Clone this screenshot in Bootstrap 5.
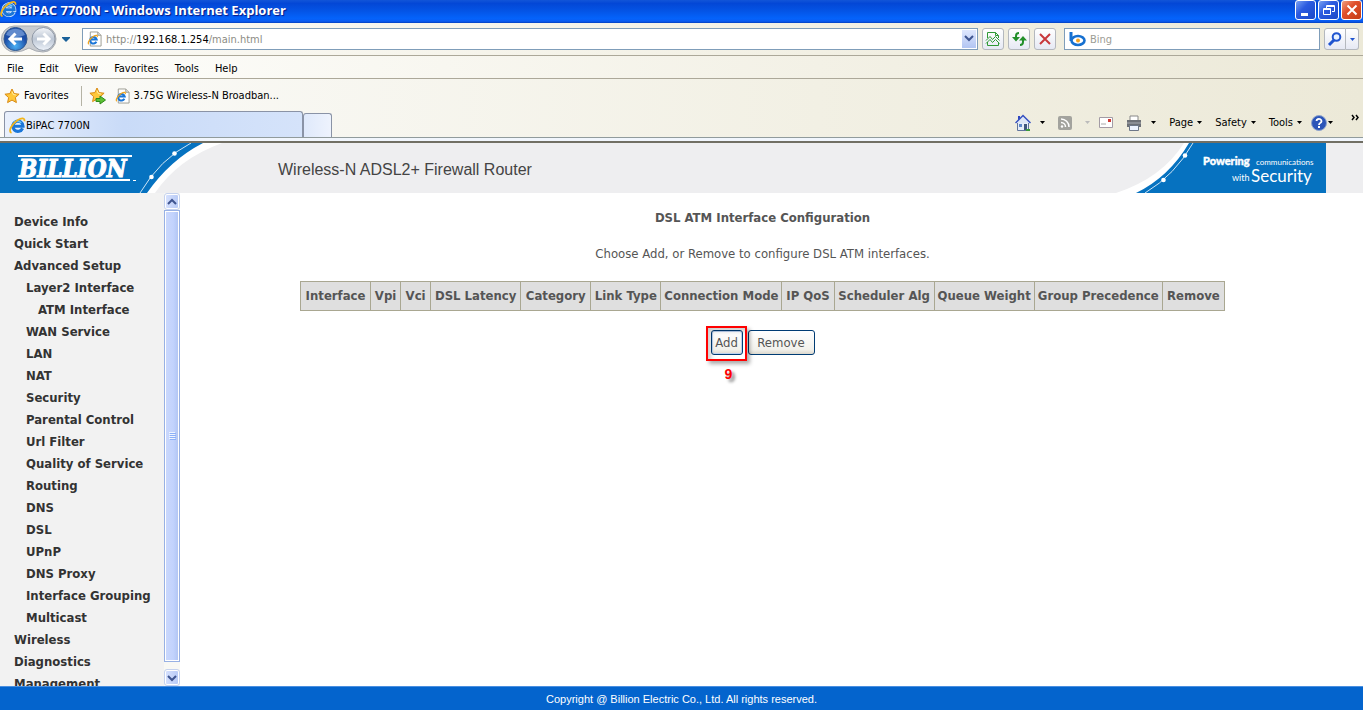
<!DOCTYPE html>
<html lang="en">
<head>
<meta charset="utf-8">
<meta name="viewport" content="width=device-width, initial-scale=1">
<title>BiPAC 7700N</title>
<link href="https://cdn.jsdelivr.net/npm/bootstrap@5.3.0/dist/css/bootstrap.min.css" rel="stylesheet">
<style>
:root{--ui:"DejaVu Sans Condensed","DejaVu Sans",sans-serif;--chrome:"DejaVu Sans Condensed","Noto Sans",sans-serif}
body{font-family:var(--chrome);font-size:11px;line-height:16px;color:#000;background:#fff}
a{color:inherit;text-decoration:none}
button{font:inherit;color:inherit}
svg{display:block;flex:none}
.titlebar{height:23px;background:linear-gradient(#1255d8 0,#0347d6 15%,#0453e4 45%,#0463fb 80%,#0a5cf2 92%,#0340c0 100%);color:#fff;font:bold 13px/20px "Open Sans",sans-serif;text-shadow:1px 1px 1px #0a1883}
.titleicon{margin-right:2px}
.winbtns{gap:2px;padding-right:1px}
.winbtn{width:21px;height:20px;padding:0;border:1px solid #fff;border-radius:3px;background:linear-gradient(135deg,#7ba2f2,#2c5be0 40%,#1a48c8)}
.winbtn-close{background:linear-gradient(135deg,#f0a080,#e0502c 40%,#c43c14)}
.winbtn svg{margin:auto}
.navrow{height:32px;background:linear-gradient(90deg,#fbfaf5,#f2f0e4 60%,#ece9d8)}
.menurow{height:24px;padding:4px 0 0 7px;border-top:1px solid #aca899;border-bottom:1px solid #aca899;background:linear-gradient(90deg,#fefefc,#f3f1e6 60%,#ece9d8)}
.favrow{height:29px;padding-top:5px;background:linear-gradient(90deg,#fbfbf9,#f2f0e4 60%,#ece9d8)}
.tabrow{height:30px;background:linear-gradient(90deg,#fbfbf9,#f2f0e4 60%,#ece9d8);border-bottom:1px solid #919b9c}
.strip{height:5px;background:#f1f6fd;border-bottom:2px solid #716f64}
.fieldbox{height:22px;border:1px solid #7f9db9;background:#fff}
.fieldbox input{border:0;outline:0;padding:2px 0 0;min-width:0;background:transparent;font-size:11px;color:#8c8c84}
.fieldbox input::placeholder{color:#9c9c94;opacity:1}
.searchbox{width:256px}
.urltext{color:#8c8c84;padding-top:2px}
.urltext b{font-weight:400;color:#000}
.drop{width:14px;height:18px;margin-right:1px;border:0;padding:0;background:linear-gradient(#dfe7fd,#b2c5f2)}
.toolbtn{height:22px;width:22px;padding:0;border:1px solid #b4b8be;border-radius:3px;background:linear-gradient(#fff,#e6e9f4)}
.toolbtn svg{margin:auto}
.toolbtn-slim{width:13px}
.plainbtn{border:0;background:none;padding:0;display:flex;align-items:center}
.menurow a{padding-right:16px}
.tabitem{border:1px solid #8a93a6;border-bottom:0;border-radius:3px 3px 0 0}
.tab-main{width:299px;height:26px;padding-top:2px;background:linear-gradient(90deg,#e9f0fc,#c9dbf8 40%,#d5e3fa)}
.tab-new{width:29px;height:24px;background:linear-gradient(90deg,#dfe9fb,#eef3fd)}
.sep{width:1px;height:20px;background:#b5b3a5;margin:0 7px 0 12px}
.brandbar{height:50px;background:#eeeef0;color:#444}
.logo{width:278px}
.tagline{margin-right:37px}
.product{font:16px/24px "Liberation Sans",Arial,sans-serif;padding-top:4px}
.gap-arrow{margin-left:9px}
.gap-item{margin-left:13px}
.more{margin:0 0 0 18px}
.sidecol{width:180px}
.sidemenu{background:#f2f2f2;font:bold 13px/22px var(--ui);color:#333;padding:18px 0 0 14px}
.sidemenu li{height:22px;white-space:nowrap}
.lvl2{padding-left:12px}
.lvl3{padding-left:24px}
.sbar{width:16px;background:#f8f8f4}
.sbtn{height:15px;width:14px;margin:1px;padding:0;border:1px solid #fff;border-radius:2px;background:linear-gradient(90deg,#d5e0fd,#b9cbf6);outline:1px solid #c5d2ee}
.thumb{margin:1px 1px 8px;border:1px solid #fff;outline:1px solid #98b1e4;background:linear-gradient(90deg,#c9d7fc,#c2d3fd 60%,#b2c6f4)}
.pane{padding:15px 18px 0 0;font:13px/20px var(--ui);color:#555}
.pane h1{font:bold 13px/20px var(--ui);margin:0 0 16px}
.intro{margin:0 0 17px}
.pane table{width:925px;table-layout:fixed;border-collapse:collapse;border:1px solid #a9a791;background:#dfdfdf;margin:0 auto}
.pane th{border:1px solid #a9a791;height:29px;padding:0;white-space:nowrap;text-align:center}
.c30{width:30px}.c52{width:52px}.c62{width:62px}.c70{width:70px}.c90{width:90px}.c100{width:100px}.c121{width:121px}.c128{width:128px}
.actions{gap:5px;margin-top:19px}
.xpbtn{height:25px;border:1px solid #003c74;border-radius:3px;background:linear-gradient(#fff,#f2f1ec 80%,#dcd8ce);padding:0}
.xp-add{width:32px;box-shadow:inset 0 0 0 1px #bcd0ee}
.xp-rem{width:67px}
.callout{position:absolute;left:-5px;top:-4px;width:41px;height:35px;border:2px solid #f00;box-shadow:3px 3px 4px #0005,inset 3px 3px 4px #0003;pointer-events:none}
.callnum{position:absolute;left:14px;top:34px;color:#f00;font:bold 14px/20px "Liberation Sans",Arial,sans-serif;text-shadow:3px 3px 3px #0007}
.foot{height:24px;background:#0464cd;border-top:1px solid #4a8fe0;color:#fff;font:11px/24px "Liberation Sans",Arial,sans-serif}
</style>
</head>
<body class="d-flex flex-column vh-100 overflow-hidden">
<svg width="0" height="0" class="position-absolute" aria-hidden="true">
<symbol id="ie" viewBox="0 0 16 16"><path d="M12.800 10.600A4.800 4.800 0 1 1 13.200 8.700H5" fill="none" stroke="#e8f4ff" stroke-width="4.200"/><path d="M12.800 10.600A4.800 4.800 0 1 1 13.200 8.700H5" fill="none" stroke="#1b76d8" stroke-width="3"/><path d="M5 4.800A5 5 0 0 1 11.500 5.500" fill="none" stroke="#69c4fa" stroke-width="1.500"/><path d="M2.500 14.800C-1 14 2 7 8 3c4-2.500 7-2.500 6.500 1" fill="none" stroke="#f2b51c" stroke-width="1.700"/></symbol>
<symbol id="iepage" viewBox="0 0 16 16"><path d="M3.500 .5h8l3.500 3.500v11.500H3.500z" fill="#fff" stroke="#9a9a90"/><path d="M11.500 .5V4H15" fill="#ddd" stroke="#9a9a90"/><path d="M10 11A3.500 3.500 0 1 1 10.300 8.500H4" fill="none" stroke="#1b76d8" stroke-width="2.200"/><path d="M2 13.500c-2-1 1-6 5-8.500 3-1.500 4.500-1 4 1" fill="none" stroke="#f2a51c" stroke-width="1.300"/></symbol>
<symbol id="star" viewBox="0 0 16 16"><path d="M8 1l2.100 4.600 5 .6-3.700 3.400 1 5L8 12.100l-4.400 2.500 1-5L.9 6.200l5-.6z" fill="#ffc83a" stroke="#d98a12" stroke-linejoin="round"/><path d="M8 3.500l1.300 3 2.500.4" fill="none" stroke="#fff1a8"/></symbol>
<symbol id="tri" viewBox="0 0 5 3"><path d="M0 0h5L2.500 3z"/></symbol>
</svg>

<header class="flex-shrink-0">
<div class="titlebar d-flex align-items-start">
  <svg width="17" height="18" class="titleicon"><use href="#ie"/></svg>
  <span class="flex-grow-1">BiPAC 7700N - Windows Internet Explorer</span>
  <div class="winbtns d-flex">
    <button class="winbtn" aria-label="Minimize"><svg width="14" height="14"><path d="M2 10h7v3H2z" fill="#fff"/></svg></button>
    <button class="winbtn" aria-label="Restore"><svg width="14" height="14" fill="none" stroke="#fff"><path d="M4.500 5V2.500h8v6H10M4.500 3.500h8M1.500 5.500h7v6h-7zM1.500 6.500h7"/></svg></button>
    <button class="winbtn winbtn-close" aria-label="Close"><svg width="14" height="14"><path d="M2.500 2.500l9 9m0-9l-9 9" stroke="#fff" stroke-width="2"/></svg></button>
  </div>
</div>

<div class="navrow d-flex align-items-center">
  <svg width="58" height="30" viewBox="0 0 58 30">
    <defs><radialGradient id="bk" cy=".8"><stop offset="0" stop-color="#49b0f4"/><stop offset="1" stop-color="#1d4ea8"/></radialGradient><linearGradient id="fw" x2="0" y2="1"><stop stop-color="#f4f6f9"/><stop offset=".5" stop-color="#bcc6d4"/><stop offset="1" stop-color="#eef3fa"/></linearGradient></defs>
    <path d="M14 2h29a13 13 0 0 1 0 26q-7 0-14-4-7 4-14 4a13 13 0 0 1-1-26z" fill="#c9ccd0" stroke="#a9adb3"/>
    <circle cx="15.500" cy="15" r="11.500" fill="url(#bk)" stroke="#31598f"/><path d="M6 11a10 9 0 0 1 19 0q-9 4-19 0z" fill="#8fb3e4" opacity=".6"/>
    <path d="M22 15H10m5.500-5.500L10 15l5.500 5.500" fill="none" stroke="#fff" stroke-width="3"/>
    <circle cx="43.500" cy="15" r="11.500" fill="url(#fw)" stroke="#8f98a5"/>
    <path d="M37 15h12m-5.500-5.500L49 15l-5.500 5.500" fill="none" stroke="#fff" stroke-width="3"/>
  </svg>
  <button class="plainbtn mx-1" aria-label="Recent pages"><svg width="8" height="6"><path d="M0 1h8v1L4 6 0 2z" fill="#1a6199"/></svg></button>
  <div class="fieldbox d-flex align-items-center flex-grow-1 ms-2 ps-1">
    <svg width="15" height="16" class="me-1"><use href="#iepage"/></svg>
    <a href="#" class="urltext flex-grow-1">http://<b>192.168.1.254</b>/main.html</a>
    <button class="drop" aria-label="Addresses"><svg width="14" height="10"><path d="M3 2l4 4 4-4" fill="none" stroke="#3f5590" stroke-width="2"/></svg></button>
  </div>
  <div class="d-flex gap-1 ms-1 me-2">
    <button class="toolbtn" aria-label="Compatibility view"><svg width="16" height="16" fill="none" stroke="#2f9a35"><path d="M2.500 7V1.500h8l3 3V7M2.500 11v3.500h11V11M10.500 1.500v3h3"/><path d="M1 9.500l4-4 2.500 3 3-3 4 4M1 12.500l4-4 2.500 3 3-3 4 4"/></svg></button>
    <button class="toolbtn" aria-label="Refresh"><svg width="16" height="16" fill="#23902b" stroke="#23902b" stroke-width="2"><path d="M8 2Q5 2 5 5v2M9 14q3 0 3-3V9" fill="none"/><path d="M1 6h8L5 10.500zM8 9.500h8L12 5z" stroke="none"/></svg></button>
    <button class="toolbtn" aria-label="Stop"><svg width="16" height="16"><path d="M3 3l10 10M13 3L3 13" stroke="#c8383c" stroke-width="2"/></svg></button>
  </div>
  <div class="fieldbox d-flex align-items-center searchbox">
    <svg width="17" height="16" class="mx-1"><path d="M2 1v9" stroke="#1670d0" stroke-width="3"/><ellipse cx="9" cy="9.500" rx="6.500" ry="4.500" fill="#fff" stroke="#1670d0" stroke-width="2.600"/><circle cx="9" cy="9.500" r="2" fill="#f6a21c"/></svg>
    <input type="text" class="flex-grow-1" placeholder="Bing" aria-label="Search">
  </div>
  <div class="d-flex ms-1 me-1">
    <button class="toolbtn rounded-end-0" aria-label="Search"><svg width="16" height="16" fill="none" stroke="#1f54d0"><circle cx="9.500" cy="6" r="3.800" fill="#e8f2ff" stroke-width="2"/><path d="M7 9l-5 5" stroke-width="3"/></svg></button>
    <button class="toolbtn toolbtn-slim rounded-start-0 border-start-0" aria-label="Search options"><svg width="5" height="3" fill="#1f54d0"><use href="#tri"/></svg></button>
  </div>
</div>

<nav class="menurow d-flex align-items-center">
  <a href="#">File</a><a href="#">Edit</a><a href="#">View</a><a href="#">Favorites</a><a href="#">Tools</a><a href="#">Help</a>
</nav>

<div class="favrow d-flex align-items-center ps-1">
  <svg width="16" height="16"><use href="#star"/></svg><a href="#" class="ms-1">Favorites</a>
  <div class="sep"></div>
  <svg width="18" height="18" viewBox="0 0 18 18"><use href="#star" width="16" height="16"/><path d="M7 11.500h4V9l5.500 4-5.500 4v-2.500H7z" fill="#5cc035" stroke="#2f8a18"/></svg>
  <svg width="15" height="16" class="me-1 ms-2"><use href="#iepage"/></svg><a href="#">3.75G Wireless-N Broadban...</a>
</div>

<div class="tabrow d-flex align-items-end ps-1">
  <a href="#" class="tabitem tab-main d-flex align-items-center ps-1"><svg width="17" height="17"><use href="#ie"/></svg>BiPAC 7700N</a>
  <button class="tabitem tab-new" aria-label="New tab"></button>
  <div class="d-flex align-items-center ms-auto align-self-center pe-1">
    <svg width="16" height="18"><path d="M3 2h2v4H3z" fill="#2f46c0"/><path d="M2.500 8.500h11v8h-11z" fill="#e6edf8" stroke="#60749c"/><path d="M.500 9L8 1.500 15.500 9" fill="#dde6f6" stroke="#3550c0" stroke-width="1.500"/><path d="M9 10h3v6H9z" fill="#40577e"/><path d="M4 10h3v3H4z" fill="#5d86c8"/><path d="M11 16h4" stroke="#3a9a3a" stroke-width="2"/></svg>
    <svg width="5" height="3" class="gap-arrow"><use href="#tri"/></svg>
    <svg width="14" height="14" class="gap-item"><rect width="14" height="14" rx="2" fill="#a3a39e"/><g fill="none" stroke="#fff" stroke-width="1.500"><path d="M3 3a8 8 0 0 1 8 8M3 6.500A4.500 4.500 0 0 1 7.500 11"/></g><circle cx="4" cy="10.500" r="1.200" fill="#fff"/></svg>
    <svg width="5" height="3" class="gap-item" fill="#bbb"><use href="#tri"/></svg>
    <svg width="14" height="11" class="gap-arrow"><path d="M.5.5h13v10H.5z" fill="#fff" stroke="#a39ba5"/><path d="M9 2h3v3H9z" fill="#d03a34"/><path d="M2 7h5" stroke="#aaa"/></svg>
    <svg width="16" height="16" class="gap-item"><path d="M4 1h8v6H4z" fill="#fff" stroke="#888"/><path d="M1 5h14v7H1z" fill="#6d7076"/><path d="M1 8h14" stroke="#a8abb2"/><path d="M3.500 10.500h9v5h-9z" fill="#eef4ff" stroke="#6d7788"/></svg>
    <svg width="5" height="3" class="gap-arrow"><use href="#tri"/></svg>
    <button class="plainbtn gap-item">Page<svg width="5" height="3" class="ms-1"><use href="#tri"/></svg></button>
    <button class="plainbtn gap-item">Safety<svg width="5" height="3" class="ms-1"><use href="#tri"/></svg></button>
    <button class="plainbtn gap-item">Tools<svg width="5" height="3" class="ms-1"><use href="#tri"/></svg></button>
    <button class="plainbtn gap-arrow" aria-label="Help"><svg width="17" height="16"><circle cx="8" cy="8" r="7.500" fill="#2c55b8" stroke="#8fa4cc"/><path d="M5.500 6a2.500 2.200 0 1 1 3.700 2Q8 8.600 8 10" fill="none" stroke="#fff" stroke-width="1.800"/><path d="M7 11h2v2H7z" fill="#fff"/></svg><svg width="5" height="3"><use href="#tri"/></svg></button>
    <button class="plainbtn more align-self-start" aria-label="More"><svg width="8" height="7" fill="none" stroke="#000" stroke-width="1.500"><path d="M1 1l2 2.500L1 6M5 1l2 2.500L5 6"/></svg></button>
  </div>
</div>
<div class="strip"></div>

<div class="brandbar d-flex align-items-center">
  <svg height="50" class="logo" viewBox="0 0 278 50" role="img" aria-label="Billion">
    <path d="M0 0h222Q178 16 155 50H0z" fill="#fff"/>
    <path d="M0 0h203Q170 17 147 50H0z" fill="#0672c0"/>
    <path d="M191 0Q160 16 140 50" fill="none" stroke="#cfe5f5"/>
    <circle cx="174.500" cy="10.500" r="2.300" fill="#fff"/><circle cx="151.500" cy="34" r="2.300" fill="#fff"/>
    <path d="M18 12h114v2H18zM18 36h112v2H18z" fill="#fff"/>
    <text x="19" y="34" font-family="DejaVu Serif Condensed, DejaVu Serif" font-size="24" font-weight="bold" font-style="italic" fill="#fff" stroke="#fff">BILLION</text>
    <path d="M133 37.500h3" stroke="#fff"/>
  </svg>
  <span class="product flex-grow-1">Wireless-N ADSL2+ Firewall Router</span>
  <svg width="210" height="50" viewBox="0 0 210 50" class="tagline" role="img" aria-label="Powering communications with Security">
    <path d="M68 0h20L30 50H0Q46 35 68 0z" fill="#fff"/>
    <path d="M210 0H73Q53 34 20 50h190z" fill="#0672c0"/>
    <path d="M77 0Q59 32 29 50" fill="none" stroke="#cfe5f5"/>
    <circle cx="69" cy="12.500" r="2.300" fill="#fff"/><circle cx="47.500" cy="37" r="2.300" fill="#fff"/>
    <g fill="#fff" font-family="Lato"><text x="87" y="22" font-size="11" font-weight="900" stroke="#fff" stroke-width=".4">Powering</text><text x="140" y="22" font-size="8">communications</text><text x="116" y="38" font-size="9">with</text><text x="135" y="39" font-size="17">Security</text></g>
  </svg>
</div>
</header>

<main class="d-flex flex-grow-1 overflow-hidden">
  <div class="sidecol d-flex flex-shrink-0">
    <nav class="sidemenu flex-grow-1 overflow-hidden">
      <ul class="list-unstyled m-0">
        <li><a href="#">Device Info</a></li>
        <li><a href="#">Quick Start</a></li>
        <li><a href="#">Advanced Setup</a></li>
        <li class="lvl2"><a href="#">Layer2 Interface</a></li>
        <li class="lvl3"><a href="#">ATM Interface</a></li>
        <li class="lvl2"><a href="#">WAN Service</a></li>
        <li class="lvl2"><a href="#">LAN</a></li>
        <li class="lvl2"><a href="#">NAT</a></li>
        <li class="lvl2"><a href="#">Security</a></li>
        <li class="lvl2"><a href="#">Parental Control</a></li>
        <li class="lvl2"><a href="#">Url Filter</a></li>
        <li class="lvl2"><a href="#">Quality of Service</a></li>
        <li class="lvl2"><a href="#">Routing</a></li>
        <li class="lvl2"><a href="#">DNS</a></li>
        <li class="lvl2"><a href="#">DSL</a></li>
        <li class="lvl2"><a href="#">UPnP</a></li>
        <li class="lvl2"><a href="#">DNS Proxy</a></li>
        <li class="lvl2"><a href="#">Interface Grouping</a></li>
        <li class="lvl2"><a href="#">Multicast</a></li>
        <li><a href="#">Wireless</a></li>
        <li><a href="#">Diagnostics</a></li>
        <li><a href="#">Management</a></li>
      </ul>
    </nav>
    <div class="sbar d-flex flex-column">
      <button class="sbtn" aria-label="Scroll up"><svg width="12" height="12"><path d="M2 8l4-4 4 4" fill="none" stroke="#3f5590" stroke-width="2"/></svg></button>
      <div class="thumb flex-grow-1 d-flex align-items-center justify-content-center"><svg width="7" height="8"><path d="M0 .5h6M0 2.500h6M0 4.500h6M0 6.500h6" stroke="#eef4fe"/><path d="M1 1.500h6M1 3.500h6M1 5.500h6M1 7.500h6" stroke="#8cb0f8"/></svg></div>
      <button class="sbtn" aria-label="Scroll down"><svg width="12" height="12"><path d="M2 4l4 4 4-4" fill="none" stroke="#3f5590" stroke-width="2"/></svg></button>
    </div>
  </div>

  <section class="pane flex-grow-1 text-center">
    <h1>DSL ATM Interface Configuration</h1>
    <p class="intro">Choose Add, or Remove to configure DSL ATM interfaces.</p>
    <table>
      <colgroup><col class="c70"><col class="c30"><col class="c30"><col class="c90"><col class="c70"><col class="c70"><col class="c121"><col class="c52"><col class="c100"><col class="c100"><col class="c128"><col class="c62"></colgroup>
      <thead><tr><th>Interface</th><th>Vpi</th><th>Vci</th><th>DSL Latency</th><th>Category</th><th>Link Type</th><th>Connection Mode</th><th>IP QoS</th><th>Scheduler Alg</th><th>Queue Weight</th><th>Group Precedence</th><th>Remove</th></tr></thead>
    </table>
    <div class="actions d-flex justify-content-center">
      <div class="position-relative"><button class="xpbtn xp-add">Add</button><span class="callout"></span><span class="callnum">9</span></div>
      <button class="xpbtn xp-rem">Remove</button>
    </div>
  </section>
</main>

<footer class="foot text-center flex-shrink-0">Copyright @ Billion Electric Co., Ltd. All rights reserved.</footer>
<script src="https://cdn.jsdelivr.net/npm/bootstrap@5.3.0/dist/js/bootstrap.bundle.min.js"></script>
</body>
</html>
